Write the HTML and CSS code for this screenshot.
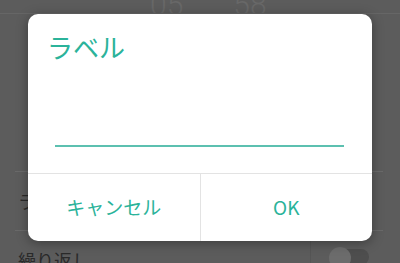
FILE: index.html
```html
<!DOCTYPE html>
<html lang="ja">
<head>
  <meta charset="UTF-8" />
  <title>ラベル</title>
  <link rel="stylesheet" href="styles.css">
</head>
<body>
  <!-- dimmed screen behind the dialog -->
  <div class="screen">
    <div class="time">
      <span>05</span>
      <span>58</span>
    </div>
    <div class="row row-first"></div>
    <div class="row row-label">ラベル</div>
    <div class="row row-repeat">
      <span class="row-text">繰り返し</span>
      <span class="row-side">
        <span class="toggle"><span class="knob"></span></span>
      </span>
    </div>
  </div>

  <div class="dialog">
    <h2 class="dialog-title">ラベル</h2>
    <div class="dialog-field">
      <input type="text" class="field-input" value="" />
    </div>
    <div class="dialog-actions">
      <button class="action">キャンセル</button>
      <button class="action">OK</button>
    </div>
  </div>
</body>
</html>
```

FILE: styles.css
```css
/* Reset and Base */
* {
  box-sizing: border-box;
}

html, body {
  margin: 0;
  height: 100%;
  overflow: hidden;
}

body {
  font-family: 'Noto Sans CJK JP', 'Noto Sans', sans-serif;
  background: #5c5c5c;
  position: relative;
}

/* Background screen (dimmed) */
.screen {
  height: 263px;
  color: #333;
}

.time {
  display: flex;
  gap: 50px;
  padding-left: 150px;
  height: 14px;
  overflow: hidden;
  font-family: 'Roboto', sans-serif;
  font-size: 30px;
  line-height: 10px;
  color: #686868;
  font-weight: 300;
  border-bottom: 1px solid #666;
}

.row {
  margin: 0 17px 0 15px;
  border-bottom: 1px solid #6a6a6a;
}

.row-first {
  height: 158px;
}

.row-label {
  height: 59px;
  line-height: 59px;
  padding-left: 3px;
  font-size: 18px;
  color: #2a2a2a;
}

.row-repeat {
  display: flex;
  border-bottom: none;
  height: 40px;
}

.row-text {
  flex: 1;
  padding: 16px 0 0 3px;
  font-size: 18px;
  color: #2a2a2a;
}

.row-side {
  width: 73px;
  border-left: 1px solid #555;
  padding: 18px 0 0 20px;
}

.toggle {
  display: block;
  width: 38px;
  height: 16px;
  border-radius: 8px;
  background: #4e4e4e;
  position: relative;
}

.knob {
  position: absolute;
  left: -2px;
  top: -2px;
  width: 22px;
  height: 22px;
  border-radius: 50%;
  background: #6c6c6c;
}

/* Dialog */
.dialog {
  position: absolute;
  left: 28px;
  top: 14px;
  width: 344px;
  height: 227px;
  background: #fff;
  border-radius: 10px;
  box-shadow: 0 2px 12px rgba(0, 0, 0, 0.35);
  display: flex;
  flex-direction: column;
}

.dialog-title {
  margin: 0;
  padding: 19px 0 0 19px;
  font-size: 26px;
  line-height: 28px;
  font-weight: 400;
  color: #2bb39a;
}

.dialog-field {
  padding: 0 28px 0 27px;
  margin-top: 72px;
}

.field-input {
  display: block;
  width: 100%;
  height: 14px;
  border: none;
  border-bottom: 2px solid #5cc0b0;
  outline: none;
  background: transparent;
  padding: 0;
}

.dialog-actions {
  margin-top: auto;
  height: 68px;
  display: flex;
  border-top: 1px solid #e3e3e3;
}

.action {
  flex: 1;
  background: none;
  border: none;
  font-family: 'Noto Sans CJK JP', 'Noto Sans', sans-serif;
  font-size: 19px;
  color: #2bb39a;
  padding: 0 0 2px;
}

.action + .action {
  border-left: 1px solid #e3e3e3;
}
```
